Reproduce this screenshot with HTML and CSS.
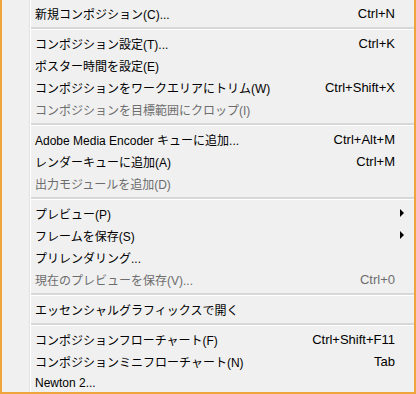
FILE: index.html
```html
<!DOCTYPE html>
<html lang="ja">
<head>
  <meta charset="UTF-8">
  <title>コンポジション</title>
  <link rel="stylesheet" href="styles.css">
</head>
<body>
<div class="menu">
  <ul class="items">
    <li class="item"><span class="label">新規コンポジション(C)...</span><span class="key">Ctrl+N</span></li>
    <li class="sep"></li>
    <li class="item"><span class="label">コンポジション設定(T)...</span><span class="key">Ctrl+K</span></li>
    <li class="item"><span class="label">ポスター時間を設定(E)</span></li>
    <li class="item"><span class="label">コンポジションをワークエリアにトリム(W)</span><span class="key">Ctrl+Shift+X</span></li>
    <li class="item off"><span class="label">コンポジションを目標範囲にクロップ(I)</span></li>
    <li class="sep"></li>
    <li class="item"><span class="label">Adobe Media Encoder キューに追加...</span><span class="key">Ctrl+Alt+M</span></li>
    <li class="item"><span class="label">レンダーキューに追加(A)</span><span class="key">Ctrl+M</span></li>
    <li class="item off"><span class="label">出力モジュールを追加(D)</span></li>
    <li class="sep"></li>
    <li class="item sub"><span class="label">プレビュー(P)</span></li>
    <li class="item sub"><span class="label">フレームを保存(S)</span></li>
    <li class="item"><span class="label">プリレンダリング...</span></li>
    <li class="item off"><span class="label">現在のプレビューを保存(V)...</span><span class="key">Ctrl+0</span></li>
    <li class="sep"></li>
    <li class="item"><span class="label">エッセンシャルグラフィックスで開く</span></li>
    <li class="sep"></li>
    <li class="item"><span class="label">コンポジションフローチャート(F)</span><span class="key">Ctrl+Shift+F11</span></li>
    <li class="item"><span class="label">コンポジションミニフローチャート(N)</span><span class="key">Tab</span></li>
    <li class="item"><span class="label">Newton 2...</span></li>
  </ul>
</div>
</body>
</html>
```

FILE: styles.css
```css
* {
  box-sizing: border-box;
}
html, body {
  margin: 0;
  height: 394px;
  overflow: hidden;
  background: #f0f0f0;
}
.menu {
  height: 394px;
  background: #f0f0f0;
  border: 2px solid #f0a53c;
  border-top: 0;
  font-family: "Liberation Sans", "Noto Sans CJK JP", sans-serif;
  font-size: 12px;
  color: #000;
  overflow: hidden;
}
.items {
  list-style: none;
  margin: 0;
  padding: 2px 0 0 0;
  background: linear-gradient(to right, transparent 27px, #e2e2e2 27px, #e2e2e2 28px, #fff 28px, #fff 29px, transparent 29px);
  height: 100%;
}
.item {
  display: flex;
  align-items: center;
  height: 22px;
  padding: 0 19px 0 33px;
  position: relative;
  white-space: nowrap;
}
.label {
  flex: 1;
}
.key {
  text-align: right;
  font-size: 13px;
}
.off {
  color: #6d6d6d;
}
.sub::after {
  content: "";
  position: absolute;
  right: 10px;
  top: 7px;
  border-left: 4px solid #000;
  border-top: 4px solid transparent;
  border-bottom: 4px solid transparent;
}
.sep {
  height: 8px;
  margin-left: 29px;
  padding-top: 3px;
}
.sep::before {
  content: "";
  display: block;
  background: #d7d7d7;
  border-bottom: 1px solid #fff;
  height: 2px;
  background-clip: content-box;
}
```
